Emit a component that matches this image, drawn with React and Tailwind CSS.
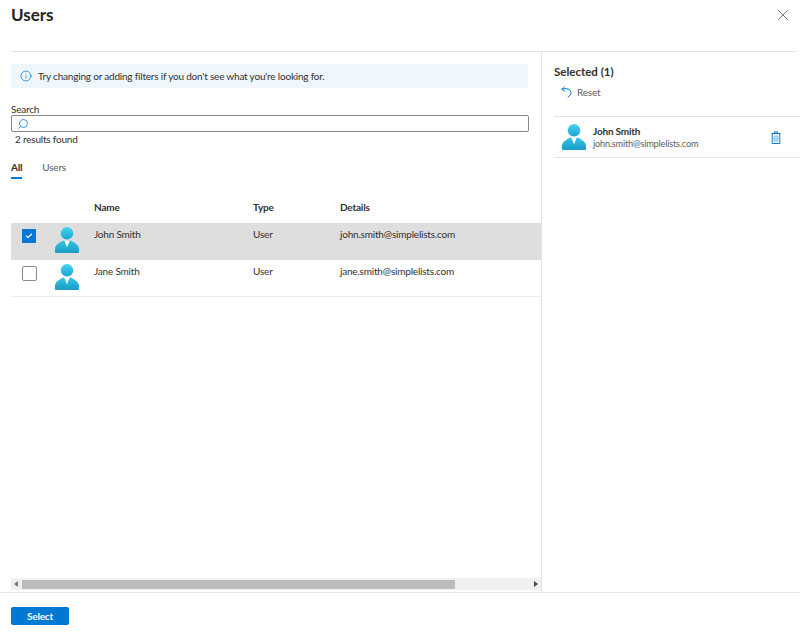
import { X, Info, Search, Check } from 'lucide-react';

const users = [
    { name: 'John Smith', email: 'john.smith@simplelists.com', selected: true },
    { name: 'Jane Smith', email: 'jane.smith@simplelists.com', selected: false },
];

const UserIcon = ({ id }) => (
    <svg width="24" height="26" viewBox="0 0 24 26" className="shrink-0">
        <defs>
            <linearGradient id={`head-${id}`} x1="0" y1="0" x2="0" y2="1">
                <stop offset="0" stopColor="#45d4f2" />
                <stop offset="1" stopColor="#1ba6d0" />
            </linearGradient>
            <linearGradient id={`body-${id}`} x1="0" y1="0" x2="0" y2="1">
                <stop offset="0" stopColor="#35c4e6" />
                <stop offset="1" stopColor="#1a9cc6" />
            </linearGradient>
        </defs>
        <circle cx="12" cy="6.3" r="6.2" fill={`url(#head-${id})`} />
        <path d="M0 25 V22 C0 18 4.5 15.6 8.4 13.6 L10.2 14.2 L12 19 L13.8 14.2 L15.6 13.6 C19.5 15.6 24 18 24 22 V25 Q24 26 23 26 H1 Q0 26 0 25 Z" fill={`url(#body-${id})`} />
        <path d="M9.4 14 H14.6 L12 20.5 Z" fill="#ffffff" opacity="0.9" />
    </svg>
);

const Row = ({ user }) => (
    <div className={`flex h-[37px] items-start ${user.selected ? 'bg-[#dedede]' : 'border-b border-[#eeeeee]'}`}>
        <div className="w-[44px] pl-[11px] pt-[6px]">
            {user.selected ? (
                <div className="flex h-[14px] w-[14px] items-center justify-center rounded-[1px] bg-[#0078d4]">
                    <Check className="h-[8px] w-[8px] text-white" strokeWidth={3.5} />
                </div>
            ) : (
                <div className="h-[15px] w-[15px] rounded-[2px] border border-[#8a8a8a] bg-white" />
            )}
        </div>
        <div className="w-[39px] pt-[4px]">
            <UserIcon id={user.name.split(' ')[0]} />
        </div>
        <div className="w-[159px] pt-[4px] leading-[14px]">{user.name}</div>
        <div className="w-[87px] pt-[4px] leading-[14px]">User</div>
        <div className="pt-[4px] leading-[14px]">{user.email}</div>
    </div>
);

export default function App() {
    return (
        <div className="flex h-[636px] w-[800px] flex-col overflow-hidden bg-white text-[10px] tracking-[-0.2px] text-[#323130] [font-family:'Lato','Liberation_Sans',sans-serif]">
            <div className="ml-[11px] mr-[5px] flex h-[52px] shrink-0 items-start justify-between border-b border-[#e3e3e3] pt-[2px]">
                <h1 className="text-[17px] leading-[26px] font-bold tracking-normal text-[#252423]">Users</h1>
                <X className="mt-[4px] mr-[3px] h-[18px] w-[18px] text-[#605e5c]" strokeWidth={1.1} />
            </div>

            <div className="flex min-h-0 flex-1 border-b border-[#e3e3e3]">
                <div className="flex w-[542px] shrink-0 flex-col border-r border-[#e3e3e3] pl-[11px]">
                    <div className="mt-[12px] mr-[13px] flex h-[24px] items-center gap-[6px] bg-[#eff6fc] pl-[9px]">
                        <Info className="h-[12px] w-[12px] text-[#0078d4]" strokeWidth={1.5} />
                        <span>Try changing or adding filters if you don't see what you're looking for.</span>
                    </div>

                    <label className="mt-[15px] leading-[12px]">Search</label>
                    <div className="mr-[12px] flex h-[17px] items-center rounded-[2px] border border-[#8a8886] pl-[5px]">
                        <Search className="h-[12px] w-[12px] -scale-x-100 text-[#0078d4]" strokeWidth={1.5} />
                    </div>
                    <div className="mt-[1px] pl-[4px] leading-[13px]">2 results found</div>

                    <div className="mt-[14px] flex gap-[20px] leading-[14px]">
                        <div className="font-bold">
                            <div>All</div>
                            <div className="mt-[3px] h-[2px] bg-[#0078d4]" />
                        </div>
                        <div className="text-[#605e5c]">Users</div>
                    </div>

                    <div className="mt-[14px] flex h-[30px] shrink-0 pt-[7px] leading-[14px] font-bold">
                        <div className="w-[83px]" />
                        <div className="w-[159px]">Name</div>
                        <div className="w-[87px]">Type</div>
                        <div>Details</div>
                    </div>
                    {users.map((user) => (
                        <Row key={user.email} user={user} />
                    ))}

                    {/* Horizontal scrollbar */}
                    <div className="mt-auto mb-[2px] flex h-[12px] items-center bg-[#f1f1f1] px-[3px]">
                        <div className="h-0 w-0 border-y-[3px] border-r-[4px] border-y-transparent border-r-[#777777]" />
                        <div className="ml-[4px] h-[9px] w-[433px] bg-[#bcbcbc]" />
                        <div className="ml-auto h-0 w-0 border-y-[3px] border-l-[4px] border-y-transparent border-l-[#444444]" />
                    </div>
                </div>

                <div className="flex min-w-0 flex-1 flex-col pl-[12px]">
                    <div className="mt-[12px] text-[11.5px] leading-[16px] font-bold tracking-normal">Selected (1)</div>
                    <div className="mt-[4px] flex items-center gap-[5px] pl-[7px] leading-[16px] text-[#605e5c]">
                        <svg width="11" height="12" viewBox="0 0 11 12" fill="none" stroke="#0078d4" strokeWidth="1">
                            <path d="M3.5 0.8 L0.8 3.2 L4 5.2 M0.8 3.2 C5 1.8 10 2.8 10 6.5 C10 8.6 8.6 10 6.8 11.2" />
                        </svg>
                        <span>Reset</span>
                    </div>
                    <div className="mt-[16px] flex h-[42px] items-center border-y border-[#e3e3e3] pl-[8px] pr-[19px]">
                        <UserIcon id="selected" />
                        <div className="ml-[7px] flex-1">
                            <div className="leading-[13px] font-bold">John Smith</div>
                            <div className="text-[9.2px] leading-[12px] text-[#605e5c]">john.smith@simplelists.com</div>
                        </div>
                        <svg width="10" height="13" viewBox="0 0 10 13" fill="none" stroke="#0078d4" strokeWidth="1">
                            <path d="M0.5 2.5 H9.5 M3.5 2.5 V0.8 H6.5 V2.5 M1.2 2.5 V12.5 H8.8 V2.5" />
                            <path d="M3.2 4.5 V10.8 M5 4.5 V10.8 M6.8 4.5 V10.8" opacity="0.6" />
                        </svg>
                    </div>
                </div>
            </div>

            <div className="flex h-[43px] shrink-0 items-start pl-[11px] pt-[14px]">
                <button className="h-[18px] w-[58px] rounded-[2px] bg-[#0078d4] text-[10px] leading-[18px] font-bold text-white">Select</button>
            </div>
        </div>
    );
}
